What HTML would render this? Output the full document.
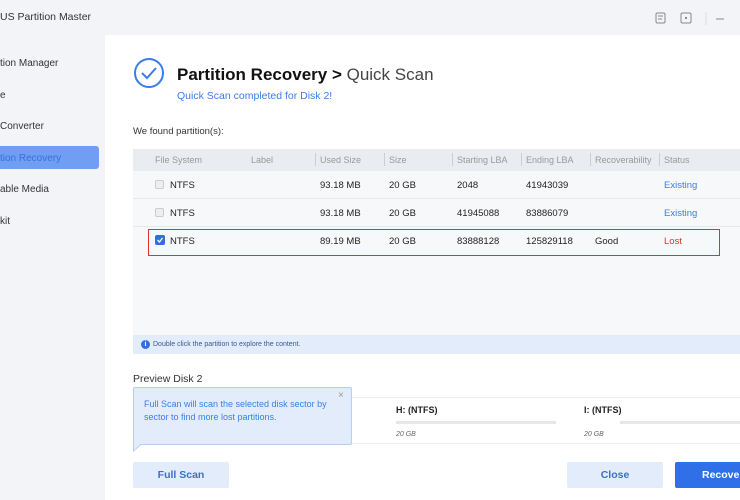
<!DOCTYPE html><html><head><style>
*{margin:0;padding:0;box-sizing:border-box}
body{width:740px;height:500px;overflow:hidden;background:#f3f4f7;font-family:"Liberation Sans",sans-serif;position:relative;color:#222}
.a{position:absolute;white-space:nowrap}
.main{position:absolute;left:105px;top:35px;width:635px;height:465px;background:#fff}
.side{font-size:10px;color:#333}
.th{font-size:9px;color:#999;top:155px}
.r{font-size:9.5px;color:#222}
.sep{position:absolute;top:153px;width:1px;height:13px;background:#ccd}
</style></head><body>
<div class="a" style="left:0;top:11px;font-size:10.5px;color:#333">US Partition Master</div>
<svg class="a" style="left:654px;top:12px" width="70" height="14"><rect x="2" y="1" width="9" height="10" rx="1.5" fill="none" stroke="#888"/><line x1="4" y1="4" x2="9" y2="4" stroke="#888"/><line x1="4" y1="7" x2="8" y2="7" stroke="#888"/><rect x="27" y="1" width="10" height="10" rx="1.5" fill="none" stroke="#888"/><rect x="31" y="5" width="2" height="2" fill="#888"/><line x1="52" y1="0" x2="52" y2="13" stroke="#ddd"/><line x1="62" y1="7" x2="70" y2="7" stroke="#888"/></svg>
<div class="a side" style="left:0;top:58px">tion Manager</div>
<div class="a side" style="left:0;top:90px">e</div>
<div class="a side" style="left:0;top:121px">Converter</div>
<div class="a" style="left:0;top:146px;width:99px;height:23px;background:#6f9ef3;border-radius:0 3px 3px 0"></div>
<div class="a side" style="left:0;top:153px;color:#3a6fd8">tion Recovery</div>
<div class="a side" style="left:0;top:184px">able Media</div>
<div class="a side" style="left:0;top:216px">kit</div>
<div class="main"></div>
<svg class="a" style="left:133px;top:57px" width="32" height="32"><circle cx="16" cy="16" r="14" fill="none" stroke="#3b7de8" stroke-width="2"/><path d="M9 16l5 5 9-10" fill="none" stroke="#3b7de8" stroke-width="2"/></svg>
<div class="a" style="left:177px;top:65px;font-size:17px;font-weight:bold;color:#111">Partition Recovery &gt; <span style="font-weight:normal;color:#444">Quick Scan</span></div>
<div class="a" style="left:177px;top:90px;font-size:10.5px;color:#3b7de8">Quick Scan completed for Disk 2!</div>
<div class="a" style="left:133px;top:126px;font-size:9.5px;color:#333">We found partition(s):</div>
<div class="a" style="left:133px;top:149px;width:607px;height:186px;background:#f7f8fa"></div>
<div class="a" style="left:133px;top:149px;width:607px;height:22px;background:#e9ecf1"></div>
<div class="a th" style="left:155px">File System</div><div class="a th" style="left:251px">Label</div>
<div class="sep" style="left:315px"></div><div class="a th" style="left:320px">Used Size</div>
<div class="sep" style="left:384px"></div><div class="a th" style="left:389px">Size</div>
<div class="sep" style="left:452px"></div><div class="a th" style="left:457px">Starting LBA</div>
<div class="sep" style="left:521px"></div><div class="a th" style="left:526px">Ending LBA</div>
<div class="sep" style="left:590px"></div><div class="a th" style="left:595px">Recoverability</div>
<div class="sep" style="left:659px"></div><div class="a th" style="left:664px">Status</div>
<div class="a" style="left:133px;top:198px;width:607px;height:1px;background:#e6e8ec"></div>
<div class="a" style="left:133px;top:226px;width:607px;height:1px;background:#e6e8ec"></div>
<div class="a" style="left:155px;top:180px;width:9px;height:9px;border:1px solid #ccc;border-radius:2px;background:#eee"></div>
<div class="a" style="left:155px;top:208px;width:9px;height:9px;border:1px solid #ccc;border-radius:2px;background:#eee"></div>
<div class="a r" style="left:170px;top:180px">NTFS</div><div class="a r" style="left:320px;top:180px">93.18 MB</div><div class="a r" style="left:389px;top:180px">20 GB</div><div class="a r" style="left:457px;top:180px">2048</div><div class="a r" style="left:526px;top:180px">41943039</div><div class="a r" style="left:664px;top:180px;color:#3b7de8">Existing</div>
<div class="a r" style="left:170px;top:208px">NTFS</div><div class="a r" style="left:320px;top:208px">93.18 MB</div><div class="a r" style="left:389px;top:208px">20 GB</div><div class="a r" style="left:457px;top:208px">41945088</div><div class="a r" style="left:526px;top:208px">83886079</div><div class="a r" style="left:664px;top:208px;color:#3b7de8">Existing</div>
<div class="a" style="left:148px;top:229px;width:572px;height:27px;border:1.5px solid #e03030"></div>
<svg class="a" style="left:155px;top:235px" width="10" height="10"><rect width="10" height="10" rx="2" fill="#2f6fe0"/><path d="M2.5 5l2 2 3-4" fill="none" stroke="#fff" stroke-width="1.3"/></svg>
<div class="a r" style="left:170px;top:236px">NTFS</div><div class="a r" style="left:320px;top:236px">89.19 MB</div><div class="a r" style="left:389px;top:236px">20 GB</div><div class="a r" style="left:457px;top:236px">83888128</div><div class="a r" style="left:526px;top:236px">125829118</div><div class="a r" style="left:595px;top:236px">Good</div><div class="a r" style="left:664px;top:236px;color:#e03030">Lost</div>
<div class="a" style="left:133px;top:335px;width:607px;height:19px;background:#e3ecfa"></div>
<div class="a" style="left:141px;top:340px;width:9px;height:9px;border-radius:50%;background:#2f6fe0;color:#fff;font-size:7px;text-align:center;line-height:9px;font-weight:bold">i</div>
<div class="a" style="left:153px;top:341px;font-size:7px;color:#3a5a90">Double click the partition to explore the content.</div>
<div class="a" style="left:133px;top:373px;font-size:10.5px;color:#333">Preview Disk 2</div>
<div class="a" style="left:133px;top:397px;width:607px;height:47px;border-top:1px solid #eee;border-bottom:1px solid #eee"></div>
<div class="a" style="left:396px;top:405px;font-size:9px;font-weight:bold;color:#222">H: (NTFS)</div>
<div class="a" style="left:396px;top:421px;width:160px;height:3px;background:#e4e7ec"></div>
<div class="a" style="left:396px;top:431px;font-size:7px;font-style:italic;color:#666">20 GB</div>
<div class="a" style="left:584px;top:405px;font-size:9px;font-weight:bold;color:#222">I: (NTFS)</div>
<div class="a" style="left:620px;top:421px;width:120px;height:3px;background:#e4e7ec"></div>
<div class="a" style="left:584px;top:431px;font-size:7px;font-style:italic;color:#666">20 GB</div>
<div class="a" style="left:133px;top:387px;width:219px;height:58px;background:#e3ecfa;border:1px solid #b9cdee;border-radius:2px"></div>
<svg class="a" style="left:133px;top:444px" width="14" height="8"><path d="M0 0V7L8 0Z" fill="#e3ecfa"/><path d="M0.5 0V7L8 0.5" fill="none" stroke="#b9cdee"/></svg>
<div class="a" style="left:144px;top:398px;font-size:9px;color:#3b7de8;line-height:13px">Full Scan will scan the selected disk sector by<br>sector to find more lost partitions.</div>
<div class="a" style="left:338px;top:390px;font-size:10px;color:#999">×</div>
<div class="a" style="left:133px;top:462px;width:96px;height:26px;background:#e3ecfa;border-radius:2px;font-size:10.5px;font-weight:bold;color:#3b6fc8;text-align:center;line-height:26px">Full Scan</div>
<div class="a" style="left:567px;top:462px;width:96px;height:26px;background:#e3ecfa;border-radius:2px;font-size:10.5px;font-weight:bold;color:#3b6fc8;text-align:center;line-height:26px">Close</div>
<div class="a" style="left:675px;top:462px;width:80px;height:26px;background:#2f6fe8;border-radius:2px;font-size:10.5px;font-weight:bold;color:#fff;line-height:26px;padding-left:27px">Recover</div>
</body></html>
